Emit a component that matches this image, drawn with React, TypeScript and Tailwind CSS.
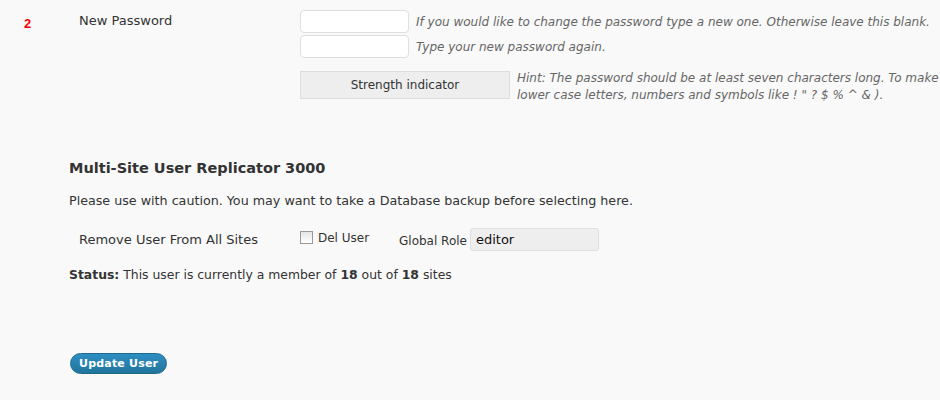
import React from "react";

export default function App() {
  const font = { fontFamily: '"DejaVu Sans", Verdana, sans-serif' };
  return (
    <div className="relative w-[940px] h-[400px] bg-[#f9f9f9] text-[#333] overflow-hidden" style={font}>
      <span className="absolute left-[24px] top-[14px] text-[13px] font-bold text-[#ff0000]" style={{ fontFamily: '"Liberation Sans", Arial, sans-serif' }}>2</span>

      <div className="flex pl-[79px] pt-[10px]">
        <div className="w-[221px] shrink-0 pt-[1px] text-[13px] whitespace-nowrap">New Password</div>
        <div className="flex flex-col">
          <div className="flex items-center gap-[7px]">
            <div className="w-[109px] h-[23px] shrink-0 bg-white border border-[#dfdfdf] rounded-[4px]" />
            <span className="text-[12px] italic text-[#666] whitespace-nowrap">If you would like to change the password type a new one. Otherwise leave this blank.</span>
          </div>
          <div className="flex items-center gap-[7px] mt-[2px]">
            <div className="w-[109px] h-[23px] shrink-0 bg-white border border-[#dfdfdf] rounded-[4px]" />
            <span className="text-[12px] italic text-[#666] whitespace-nowrap">Type your new password again.</span>
          </div>
          <div className="flex items-start gap-[7px] mt-[13px]">
            <div className="w-[210px] h-[28px] shrink-0 bg-[#eeeeee] border border-[#dddddd] flex items-center justify-center text-[12px] text-[#333]">Strength indicator</div>
            <div className="text-[12px] italic text-[#666] leading-[17px] whitespace-nowrap -mt-[1px]">
              <div>Hint: The password should be at least seven characters long. To make</div>
              <div>lower case letters, numbers and symbols like ! " ? $ % ^ &amp; ).</div>
            </div>
          </div>
        </div>
      </div>

      <div className="pl-[69px] mt-[54px]">
        <h3 className="text-[14.5px] font-bold text-[#333]">Multi-Site User Replicator 3000</h3>
        <p className="text-[12.7px] mt-[11px]">Please use with caution. You may want to take a Database backup before selecting here.</p>
        <div className="flex items-center mt-[18px] pl-[10px]">
          <div className="w-[221px] shrink-0 text-[13px] whitespace-nowrap">Remove User From All Sites</div>
          <div className="flex items-center gap-[5px] w-[99px] shrink-0 -mt-[3px]">
            <span className="w-[13px] h-[13px] border border-[#999] bg-gradient-to-b from-[#e6e6e6] to-[#fff]" />
            <span className="text-[12px]">Del User</span>
          </div>
          <span className="text-[12px] mt-[4px] whitespace-nowrap">Global Role</span>
          <div className="ml-[3px] w-[129px] h-[23px] bg-[#eeeeee] border border-[#dfdfdf] rounded-[3px] flex items-center pl-[5px] text-[13px] text-[#111]">editor</div>
        </div>
        <p className="text-[12.4px] mt-[15px]">
          <b>Status:</b> This user is currently a member of <b>18</b> out of <b>18</b> sites
        </p>
        <button className="mt-[69px] ml-[1px] h-[21px] px-[8px] rounded-full bg-gradient-to-b from-[#2e8ec2] to-[#21759b] border border-[#1e6a8d] text-white text-[11px] font-bold tracking-[0.2px]">Update User</button>
      </div>
    </div>
  );
}
